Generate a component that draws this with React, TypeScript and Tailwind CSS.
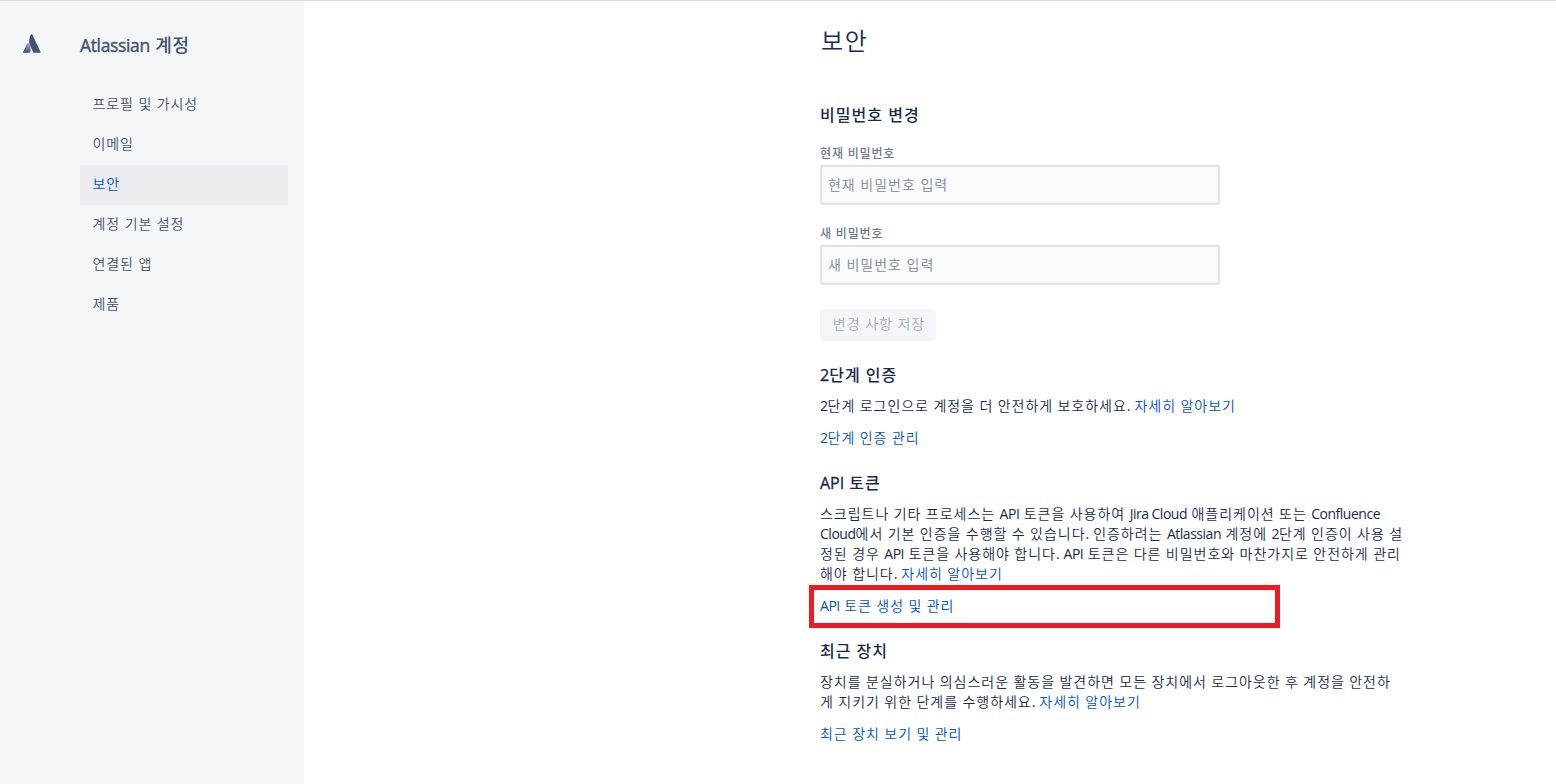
import { Fragment } from 'react';

const LATIN = /([A-Za-z]+(?: [A-Za-z]+)*|[0-9.])/;

function Text({ children }: { children: string }) {
  return (
    <>
      {children.split(LATIN).map((part, i) =>
        i % 2 === 1 ? (
          <span key={i} className="font-normal tracking-[-0.034em]">
            {part}
          </span>
        ) : (
          <Fragment key={i}>{part}</Fragment>
        ),
      )}
    </>
  );
}

function Link({ children }: { children: string }) {
  return (
    <a href="#" className="text-[#0052cc]">
      <Text>{children}</Text>
    </a>
  );
}

function Heading({ prefix, children }: { prefix?: string; children: string }) {
  return (
    <h2 className="h-5 text-base leading-5 font-medium tracking-[0.065em] whitespace-nowrap">
      {prefix && <span className="font-normal tracking-normal [-webkit-text-stroke:0.35px]">{prefix}</span>}
      {children}
    </h2>
  );
}

function Field({ label, placeholder }: { label: string; placeholder: string }) {
  return (
    <div className="flex flex-col">
      <label className="mb-[3px] h-4 text-xs leading-4 font-medium tracking-[0.07em] text-[#6b778c]">{label}</label>
      <input
        placeholder={placeholder}
        className="h-10 w-[400px] rounded-[3px] border-2 border-[#dfe1e6] bg-[#fafbfc] px-1.5 pb-0.5 text-sm font-[350] tracking-[0.07em] outline-none placeholder:text-[#7a869a]"
      />
    </div>
  );
}

function Logo() {
  return (
    <svg width="18" height="19" viewBox="0 0 18 19" className="mt-[33px] ml-[23px]">
      <defs>
        <linearGradient id="leg" x1="7.5" y1="9" x2="2.5" y2="18" gradientUnits="userSpaceOnUse">
          <stop offset="0" stopColor="#42526e" stopOpacity="0.4" />
          <stop offset="1" stopColor="#42526e" />
        </linearGradient>
      </defs>
      <path d="M5.3 8.8c-.25-.3-.65-.25-.85.1L.1 17.9c-.2.4.05.9.5.9h6c.25 0 .4-.1.5-.3 1.3-2.7.6-6.9-1.8-9.7z" fill="url(#leg)" />
      <path d="M8.1.5C5.6 4.4 5.8 8.7 7.4 12l2.9 6.4c.1.25.3.4.55.4h6.2c.45 0 .7-.45.5-.9L9.35.5c-.25-.5-.95-.5-1.25 0z" fill="#42526e" />
    </svg>
  );
}

const NAV = ['프로필 및 가시성', '이메일', '보안', '계정 기본 설정', '연결된 앱', '제품'];

const TOKEN_LINES = [
  '스크립트나 기타 프로세스는 API 토큰을 사용하여 Jira Cloud 애플리케이션 또는 Confluence',
  'Cloud에서 기본 인증을 수행할 수 있습니다. 인증하려는 Atlassian 계정에 2단계 인증이 사용 설',
  '정된 경우 API 토큰을 사용해야 합니다. API 토큰은 다른 비밀번호와 마찬가지로 안전하게 관리',
];

export default function App() {
  return (
    <div className="flex h-[784px] w-[1556px] overflow-hidden border-t border-[#d9dbe0] bg-white font-['Open_Sans','Noto_Sans_CJK_KR',sans-serif] text-[#172b4d]">
      <aside className="flex w-[304px] shrink-0 bg-[#f4f5f7] text-[#42526e]">
        <div className="w-20 shrink-0">
          <Logo />
        </div>
        <div className="w-52">
          <h1 className="mt-8 h-6 text-lg leading-6 font-semibold tracking-[0.04em] whitespace-nowrap">
            <span className="text-[17.5px] font-normal tracking-[-0.02em] [-webkit-text-stroke:0.4px]">Atlassian</span>
            <span className="font-medium"> 계정</span>
          </h1>
          <nav className="mt-7 flex flex-col">
            {NAV.map((item) => (
              <a
                key={item}
                href="#"
                className={
                  item === '보안'
                    ? 'flex h-10 items-center bg-[#ebecf0] px-[12.5px] pb-0.5 text-sm font-[350] tracking-[0.065em] text-[#0052cc]'
                    : 'flex h-10 items-center px-[12.5px] pb-0.5 text-sm font-[350] tracking-[0.065em]'
                }
              >
                {item}
              </a>
            ))}
          </nav>
        </div>
      </aside>

      <main className="ml-[516px] flex w-[600px] flex-col">
        <h1 className="mt-[26px] h-7 pl-px text-2xl leading-7 font-[350] tracking-[0.07em]">보안</h1>

        <section className="mt-[50px] flex flex-col items-start">
          <Heading>비밀번호 변경</Heading>
          <div className="mt-[21px] flex flex-col gap-[21px]">
            <Field label="현재 비밀번호" placeholder="현재 비밀번호 입력" />
            <Field label="새 비밀번호" placeholder="새 비밀번호 입력" />
          </div>
          <button disabled className="mt-6 h-8 w-[116px] rounded-[3px] bg-[#f4f5f7] pb-0.5 pl-0.5 text-sm font-[350] tracking-[0.07em] whitespace-nowrap text-[#a5adba]">
            변경 사항 저장
          </button>
        </section>

        <section className="mt-6 text-sm leading-5 font-[350] tracking-[0.07em] [word-spacing:-0.2px] whitespace-nowrap">
          <Heading prefix="2">단계 인증</Heading>
          <p className="mt-[11px]">
            <Text>2단계 로그인으로 계정을 더 안전하게 보호하세요. </Text>
            <Link>자세히 알아보기</Link>
          </p>
          <p className="mt-3">
            <Link>2단계 인증 관리</Link>
          </p>
        </section>

        <section className="mt-[25px] text-sm leading-5 font-[350] tracking-[0.07em] [word-spacing:-0.2px] whitespace-nowrap">
          <Heading prefix="API">{' 토큰'}</Heading>
          <div className="mt-[11px]">
            {TOKEN_LINES.map((line) => (
              <p key={line}>
                <Text>{line}</Text>
              </p>
            ))}
            <p>
              <Text>해야 합니다. </Text>
              <Link>자세히 알아보기</Link>
            </p>
          </div>
          <p className="mt-px -ml-[11px] flex h-[43px] w-[471px] items-center border-[5px] border-[#ed1c24] pb-0.5 pl-1.5">
            <a href="#" className="text-[#0052cc]">
              <Text>API 토큰 생성 및 관리</Text>
            </a>
          </p>
        </section>

        <section className="mt-[13px] text-sm leading-5 font-[350] tracking-[0.07em] [word-spacing:-0.2px] whitespace-nowrap">
          <Heading>최근 장치</Heading>
          <p className="mt-[11px]">장치를 분실하거나 의심스러운 활동을 발견하면 모든 장치에서 로그아웃한 후 계정을 안전하</p>
          <p>
            <Text>게 지키기 위한 단계를 수행하세요. </Text>
            <Link>자세히 알아보기</Link>
          </p>
          <p className="mt-3">
            <Link>최근 장치 보기 및 관리</Link>
          </p>
        </section>
      </main>
    </div>
  );
}
